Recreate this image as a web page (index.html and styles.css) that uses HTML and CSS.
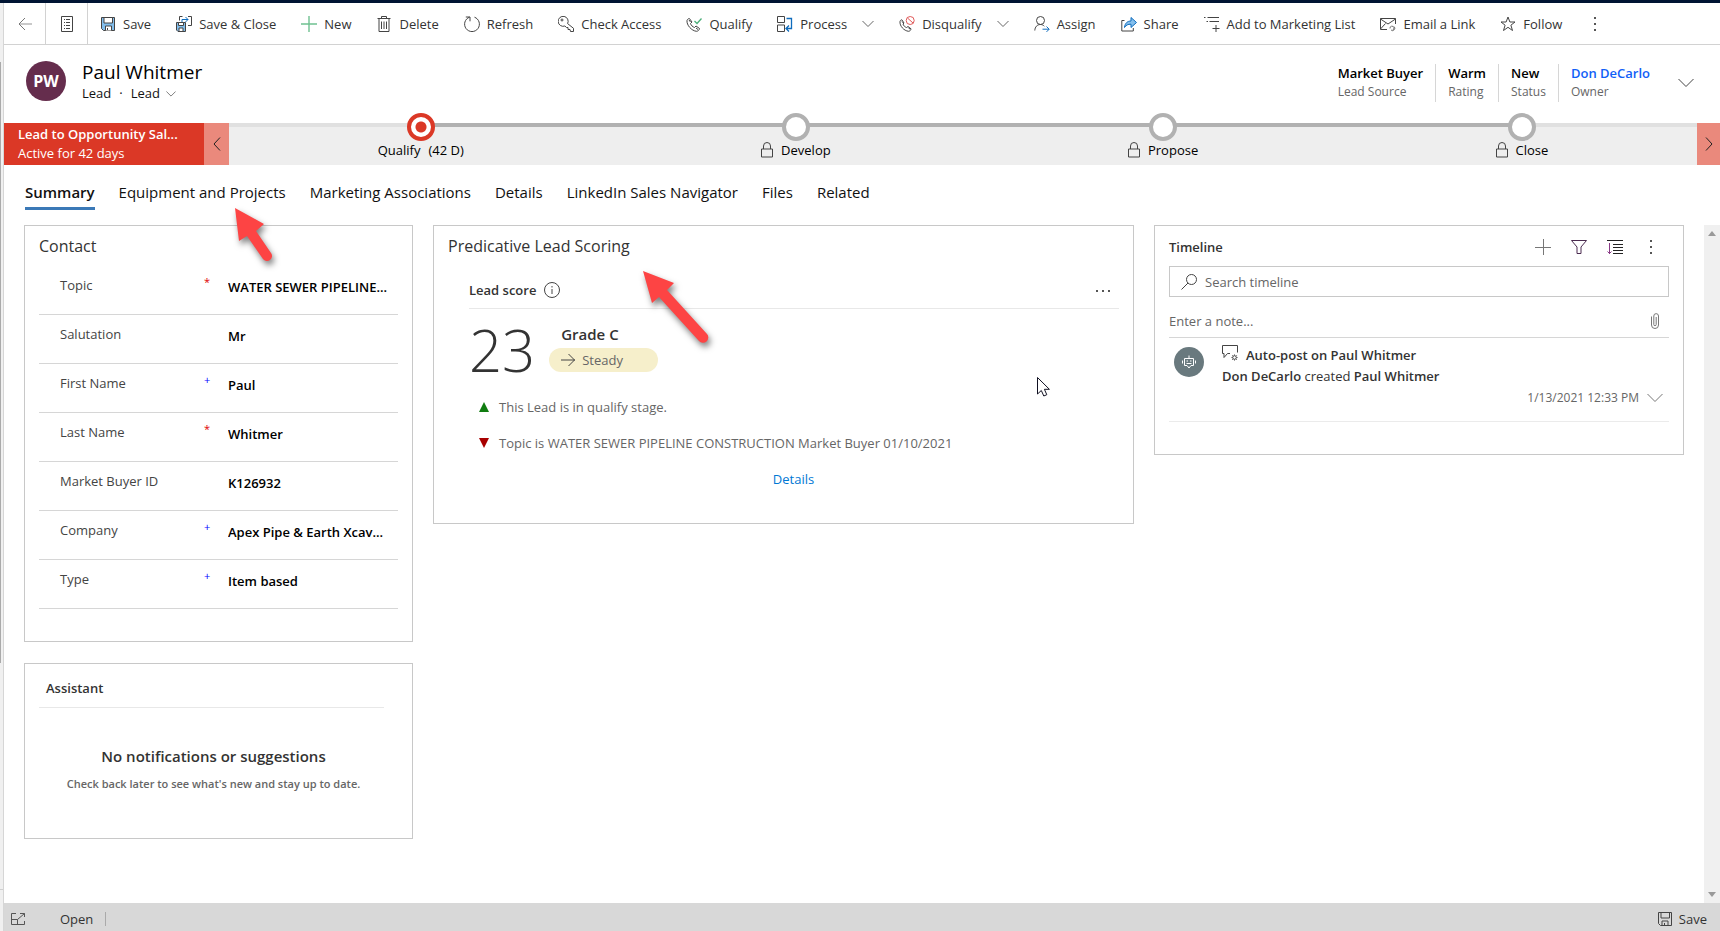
FILE: index.html
```html
<!DOCTYPE html>
<html lang="en">
<head>
<meta charset="utf-8">
<title>Lead: Paul Whitmer</title>
<link rel="stylesheet" href="styles.css">
</head>
<body>
<div class="top-strip"></div>
<div class="shell">
  <div class="nav-edge"><div class="nav-thumb"></div><div class="nav-rule"></div></div>
  <div class="app">
    <div class="commands" role="toolbar" aria-label="Commands">
      <button class="cmd-square" aria-label="Back"><svg class="icon" viewBox="0 0 16 16"><path d="M15 8H2" stroke="#bbb" stroke-width="1.6"/><path d="M8 2L2 8l6 6" stroke="#777"/></svg></button>
      <button class="cmd-square" aria-label="Form view"><svg class="icon" viewBox="0 0 16 16"><path d="M2.500.500h11v15h-11zM5 3.500h1M7 3.500h4M5 6.500h1M7 6.500h4M5 9.500h1M7 9.500h4M5 12.500h1M7 12.500h4"/></svg></button>
      <div class="cmd-list">
      <button class="cmd"><svg class="icon" viewBox="0 0 16 16"><path d="M1.500 1.500h13v13h-11l-2-2z" fill="#83beec"/><path d="M4 1.500h8.500V7H4z" fill="#fff"/><path d="M5.500 14.500V10h6v4.500M7.500 12v2" fill="#fff"/></svg>Save</button>
      <button class="cmd"><svg class="icon" viewBox="0 0 16 16"><path d="M.500 6.500h9v9h-7.500l-1.500-1.500z" fill="#83beec"/><path d="M2.500 6.500h5v3h-5z" fill="#fff"/><path d="M3 15v-3h4v3" fill="#fff"/><path d="M3.500 4.500v-4h3M12 .500h3.500v9H12"/><path d="M6 6V3.500h6M9.500 1L12 3.500 9.500 6" stroke="#0f6cbd"/></svg>Save &amp; Close</button>
      <button class="cmd"><svg class="icon" viewBox="0 0 16 16"><path d="M8 0v16M0 8h16" stroke="#6fc191" stroke-width="1.400"/></svg>New</button>
      <button class="cmd"><svg class="icon" viewBox="0 0 16 16"><path d="M1.500 2.500h13M5.500 2.500v-2h5v2M3 3v12.500h10V3M5.500 5.500v7.500M8 5.500v7.500M10.500 5.500v7.500"/></svg>Delete</button>
      <button class="cmd"><svg class="icon" viewBox="0 0 16 16"><path d="M5.500 1.200A7.400 7.400 0 1 0 10.500 1.200M1.800 1h4.200v4.300"/></svg>Refresh</button>
      <button class="cmd"><svg class="icon" viewBox="0 0 16 16"><path d="M9.600 7.600A5 5 0 1 0 6.900 10l1.600 1.500H10v2h2l.500 2h3v-3.200L9.600 7.600z"/><circle cx="4" cy="4" r="1"/></svg>Check Access</button>
      <button class="cmd"><svg class="icon" viewBox="0 0 16 16"><path d="M1 4.500c.3-1.200 1.500-2 2.400-2L6 6 4.500 7.500c.5 1.800 2.200 3.400 4 4L10 10l3.500 2.500c0 1.200-1.500 2.800-3 2.800C5.500 14.800.500 9 1 4.500z"/><path d="M3 4l1.500 2M10 12l2 1.500"/><path d="M8.500 5l2.500 2.500L15.500 2.500" stroke="#4caf7a" stroke-width="1.300"/></svg>Qualify</button>
      <button class="cmd"><svg class="icon" viewBox="0 0 16 16"><path d="M.500.500h7v6h-7zM.500 9h7v6.500h-7z"/><path d="M9.500 2.500h5v10h-5M12 9.500l-3 3 3 3" stroke="#0f6cbd" stroke-width="1.300"/></svg>Process<svg class="chev" viewBox="0 0 12 8"><path d="M.500 1L6 6.500 11.500 1"/></svg></button>
      <button class="cmd"><svg class="icon" viewBox="0 0 16 16"><path d="M1 5.500c.3-1.200 1-1.700 1.900-1.700L5 7 4 8c.5 1.800 2 3 3.500 3.500L9 10.500l3 2.300c0 1.200-1.200 2.500-2.500 2.500C5 14.800.500 10 1 5.500z"/><path d="M3 5.500l1 1.300M9.500 12l1.500 1"/><circle cx="11.200" cy="4.500" r="4" stroke="#e05a5a"/><path d="M8.500 2l5.500 5" stroke="#e05a5a"/></svg>Disqualify<svg class="chev" viewBox="0 0 12 8"><path d="M.500 1L6 6.500 11.500 1"/></svg></button>
      <button class="cmd"><svg class="icon" viewBox="0 0 16 16"><circle cx="6.500" cy="4.500" r="4"/><path d="M.800 14.500C1 11 3 8.500 6.500 8.500c1.700 0 3 .8 3.800 1.700"/><path d="M8.500 13.200h6.500M12.500 10.500l2.700 2.700-2.700 2.700" stroke="#0f6cbd"/></svg>Assign</button>
      <button class="cmd"><svg class="icon" viewBox="0 0 16 16"><path d="M3.500 4.500H.800v10.500h11.500v-3"/><path d="M3.500 11.500C4 7 6.500 5 10 5V1.500L15.500 6.500 10 11.500V8.200c-3 0-5 .8-6.500 3.300z" fill="#83beec" stroke="#0f6cbd"/></svg>Share</button>
      <button class="cmd"><svg class="icon" viewBox="0 0 16 16"><path d="M0 1.500h1.500M3.500 1.500H15M2.500 5.500H4M5.500 5.500H15M12 9v7M8.500 12.500h7"/></svg>Add to Marketing List</button>
      <button class="cmd"><svg class="icon" viewBox="0 0 16 16"><path d="M7 13.500H.500v-11h15V8M.500 3L8 8l7.500-5M.500 13l5-5.500"/><path d="M10 12.500a2 2 0 1 1 2.500 1.600M14 10.500a2.200 2.200 0 1 1-3 3.500" stroke="#777"/></svg>Email a Link</button>
      <button class="cmd"><svg class="icon" viewBox="0 0 16 16"><path d="M8 1l1.900 5H15l-4.100 3.200 1.600 5.300L8 11.300l-4.500 3.200 1.600-5.300L1 6h5.100z"/></svg>Follow</button>
      <button class="cmd" aria-label="More commands"><svg class="icon dots" viewBox="0 0 16 16"><path d="M7 1h2v2H7zM7 7h2v2H7zM7 13h2v2H7z"/></svg></button>
      </div>
    </div>

    <header class="record">
      <div class="avatar">PW</div>
      <div class="identity">
        <h1>Paul Whitmer</h1>
        <div class="kind"><span>Lead</span><span>·</span><button class="form-pick">Lead<svg class="chev small" viewBox="0 0 12 8"><path d="M.500 1L6 6.500 11.500 1"/></svg></button></div>
      </div>
      <dl class="facts">
        <div><dd>Market Buyer</dd><dt>Lead Source</dt></div>
        <div><dd>Warm</dd><dt>Rating</dt></div>
        <div><dd>New</dd><dt>Status</dt></div>
        <div><dd><a href="#">Don DeCarlo</a></dd><dt>Owner</dt></div>
      </dl>
      <button class="bare" aria-label="Expand header"><svg class="icon" viewBox="0 0 16 16"><path d="M.500 4L8 11.500 15.500 4"/></svg></button>
    </header>

    <section class="process" aria-label="Business process">
      <div class="process-name"><strong>Lead to Opportunity Sal...</strong><span>Active for 42 days</span></div>
      <button class="process-prev" aria-label="Previous stage"><svg class="angle" viewBox="0 0 8 14"><path d="M7 .500L1 7l6 6.500"/></svg></button>
      <div class="stages">
        <div class="rail"></div>
        <div class="stage"><span class="node active"></span><span class="stage-label"><span>Qualify</span><span>(42 D)</span></span></div>
        <div class="stage"><span class="node"></span><span class="stage-label"><svg class="lock" viewBox="0 0 12 16"><path d="M.500 7h11v8H.500zM2.500 7V4a3.500 3.500 0 0 1 7 0v3"/></svg>Develop</span></div>
        <div class="stage"><span class="node"></span><span class="stage-label"><svg class="lock" viewBox="0 0 12 16"><path d="M.500 7h11v8H.500zM2.500 7V4a3.500 3.500 0 0 1 7 0v3"/></svg>Propose</span></div>
        <div class="stage"><span class="node"></span><span class="stage-label"><svg class="lock" viewBox="0 0 12 16"><path d="M.500 7h11v8H.500zM2.500 7V4a3.500 3.500 0 0 1 7 0v3"/></svg>Close</span></div>
      </div>
      <button class="process-next" aria-label="Next stage"><svg class="angle" viewBox="0 0 8 14"><path d="M1 .500L7 7l-6 6.500"/></svg></button>
    </section>

    <nav class="tabs">
      <a class="current" href="#">Summary</a><a href="#">Equipment and Projects</a><a href="#">Marketing Associations</a><a href="#">Details</a><a href="#">LinkedIn Sales Navigator</a><a href="#">Files</a><a href="#">Related</a>
    </nav>

    <div class="scroll-area">
      <main class="columns">
        <div class="column">
          <section class="card contact">
            <h2>Contact</h2>
            <div class="field"><label for="topic">Topic</label><span class="mark req">*</span><input id="topic" value="WATER SEWER PIPELINE..."></div>
            <div class="field"><label for="salutation">Salutation</label><span class="mark"></span><input id="salutation" value="Mr"></div>
            <div class="field"><label for="first">First Name</label><span class="mark">+</span><input id="first" value="Paul"></div>
            <div class="field"><label for="last">Last Name</label><span class="mark req">*</span><input id="last" value="Whitmer"></div>
            <div class="field"><label for="buyer">Market Buyer ID</label><span class="mark"></span><input id="buyer" value="K126932"></div>
            <div class="field"><label for="company">Company</label><span class="mark">+</span><input id="company" value="Apex Pipe &amp; Earth Xcav..."></div>
            <div class="field"><label for="type">Type</label><span class="mark">+</span><input id="type" value="Item based"></div>
          </section>
          <section class="card assistant">
            <h3>Assistant</h3>
            <p class="empty-title">No notifications or suggestions</p>
            <p class="empty-text">Check back later to see what's new and stay up to date.</p>
          </section>
        </div>

        <section class="card scoring">
          <h2>Predicative Lead Scoring</h2>
          <div class="score-head"><h3>Lead score</h3><svg class="icon" viewBox="0 0 16 16"><circle cx="8" cy="8" r="7.500"/><path d="M8 7v5M8 4v1.500"/></svg><button class="bare more" aria-label="More options"><svg class="icon dots" viewBox="0 0 16 16"><path d="M1 7h2v2H1zM7 7h2v2H7zM13 7h2v2h-2z"/></svg></button></div>
          <div class="score">
            <div class="number">23</div>
            <div class="grade"><strong>Grade C</strong><span class="trend"><svg class="icon" viewBox="0 0 16 16"><path d="M1 8h14M8.500 2l6 6-6 6"/></svg>Steady</span></div>
          </div>
          <ul class="reasons">
            <li><svg class="tri" viewBox="0 0 10 10"><path d="M5 0l5 10H0z" fill="#107c10"/></svg>This Lead is in qualify stage.</li>
            <li><svg class="tri" viewBox="0 0 10 10"><path d="M0 0h10L5 10z" fill="#a80000"/></svg>Topic is WATER SEWER PIPELINE CONSTRUCTION Market Buyer 01/10/2021</li>
          </ul>
          <a class="details" href="#">Details</a>
        </section>

        <section class="card timeline">
          <div class="timeline-head">
            <h3>Timeline</h3>
            <button class="bare" aria-label="Add"><svg class="icon" viewBox="0 0 16 16"><path d="M8.500 0v16M0 8.500h16" stroke="#777"/></svg></button>
            <button class="bare" aria-label="Filter"><svg class="icon" viewBox="0 0 16 16"><path d="M.500 1.500h15L10 8v6.500H6V8z" stroke="#4b2b50"/></svg></button>
            <button class="bare" aria-label="Sort"><svg class="icon" viewBox="0 0 16 16"><path d="M0 1.500h16M6 5.500h10M6 8.500h10M6 11.500h10M6 14.500h10" stroke="#222"/><path d="M2.500 4v11M.500 12.500l2 2 2-2" stroke="#8a3a86"/></svg></button>
            <button class="bare" aria-label="More"><svg class="icon dots" viewBox="0 0 16 16"><path d="M7 1h2v2H7zM7 7h2v2H7zM7 13h2v2H7z"/></svg></button>
          </div>
          <div class="search"><svg class="icon" viewBox="0 0 16 16"><circle cx="10.500" cy="5.500" r="5"/><path d="M7 9L.500 15.500"/></svg><input type="text" aria-label="Search timeline" placeholder="Search timeline"></div>
          <div class="note"><input type="text" aria-label="Enter a note" placeholder="Enter a note..."><button class="bare" aria-label="Attach"><svg class="icon" viewBox="0 0 16 16"><path d="M4.500 3.500v8.500a3.500 3.500 0 0 0 7 0V3a2.300 2.300 0 0 0-4.700 0v8.500a1.200 1.200 0 0 0 2.400 0V4" stroke="#777"/></svg></button></div>
          <article class="post">
            <div class="bot"><svg class="icon" viewBox="0 0 16 16"><path d="M3.500 4.500h9v7h-2.500L8 14l-2-2.500H3.500zM8 4.500V1.500M1.500 6.500v3M14.500 6.500v3"/><path d="M5.500 7h1.500M9 7h1.500M5.500 9.500h5"/></svg></div>
            <div class="post-body">
              <div class="post-title"><svg class="icon" viewBox="0 0 16 16"><path d="M8 8.500H5.500L2 12.500V8.500H.500v-8h15v7"/><circle cx="12.500" cy="12.500" r="1.800"/><path d="M12.500 9.500v1M12.500 14.500v1M9.500 12.500h1M14.500 12.500h1M10.400 10.400l.7.700M14 14l.7.700M14.700 10.400l-.7.700M11 14l-.7.700"/></svg><strong>Auto-post on Paul Whitmer</strong></div>
              <div class="post-text"><strong>Don DeCarlo</strong> created <strong>Paul Whitmer</strong></div>
              <div class="post-foot"><time>1/13/2021 12:33 PM</time><button class="bare" aria-label="Expand post"><svg class="icon" viewBox="0 0 16 16"><path d="M.500 4L8 11.500 15.500 4" stroke="#777"/></svg></button></div>
            </div>
          </article>
        </section>
      </main>
      <div class="scrollbar" aria-hidden="true"><svg viewBox="0 0 8 5"><path d="M0 5l4-5 4 5z"/></svg><svg viewBox="0 0 8 5"><path d="M0 0h8L4 5z"/></svg></div>
    </div>

    <footer class="status">
      <button class="bare" aria-label="Pop out"><svg class="icon" viewBox="0 0 16 16"><path d="M6 2.500H1.500v11h13V10M1.500 8.500h6v5M7.500 8.500l7-6M10 2.500h4.500V6" stroke="#555"/></svg></button>
      <span class="state">Open</span>
      <button class="save"><svg class="icon" viewBox="0 0 16 16"><path d="M1.500 1.500h13v13h-11l-2-2zM4 1.500h8.500V7H4zM5 14.500V10h6v4.500M7.500 12v2"/></svg>Save</button>
    </footer>
  </div>
</div>

<svg class="pointer pointer-tab" viewBox="0 0 70 80"><path d="M5 5l29 16-8 7 15 22a5 5 0 0 1-8 6L17 33l-8 5z"/></svg>
<svg class="pointer pointer-score" viewBox="0 0 70 80"><path d="M5 5l31 12-7 7 40 44a5 5 0 0 1-8 7L21 31l-7 6z"/></svg>
<svg class="cursor" viewBox="0 0 14 20"><path d="M.500.500v16.500l3.800-3.500 2.500 5.500 3-1.300-2.400-5.400h5z"/></svg>
</body>
</html>
```

FILE: styles.css
```css
* { box-sizing: border-box; }
body {
  margin: 0;
  min-height: 100vh;
  display: flex;
  flex-direction: column;
  background: #fff;
  color: #333;
  font: 13px/20px "Open Sans", "Noto Sans", sans-serif;
}
h1, h2, h3, p, ul, dl, dd { margin: 0; padding: 0; }
ul { list-style: none; }
strong, h3 { font-weight: 600; }
a { color: inherit; text-decoration: none; }
button, input { font: inherit; color: inherit; border: 0; background: none; padding: 0; margin: 0; }
input { min-width: 0; outline: 0; }
.icon { width: 16px; height: 16px; flex: none; fill: none; stroke: #444; display: block; }
.icon.dots { fill: #555; stroke: none; }
.chev { width: 12px; height: 8px; fill: none; stroke: #666; margin-left: 8px; }
.chev.small { width: 10px; margin-left: 6px; }
.bare { display: flex; align-items: center; }

.top-strip { height: 3px; background: #001433; }
.shell { flex: 1; display: flex; }
.nav-edge { width: 4px; background: #f0f0f0; border-right: 1px solid #d6d6d6; display: flex; flex-direction: column; padding: 59px 0 41px; justify-content: space-between; }
.nav-thumb { width: 1px; height: 601px; background: #aaa; }
.nav-rule { height: 1px; background: #d0d0d0; }
.app { flex: 1; min-width: 0; display: flex; flex-direction: column; }

.commands { display: flex; height: 42px; border-bottom: 1px solid #d2d2d2; }
.cmd-square { width: 42px; display: flex; align-items: center; justify-content: center; border-right: 1px solid #d2d2d2; }
.cmd-list { display: flex; padding-left: 12px; gap: 25px; }
.cmd { display: flex; align-items: center; gap: 7px; white-space: nowrap; }

.record { display: flex; align-items: center; height: 78px; padding: 0 26px 6px 22px; }
.avatar { width: 40px; height: 40px; border-radius: 50%; background: #652d4d; color: #fff; font-size: 16px; font-weight: 700; line-height: 40px; text-align: center; }
.identity { margin-left: 16px; color: #111; }
h1 { font-size: 19px; font-weight: 500; line-height: 24px; color: #000; }
.kind { display: flex; gap: 8px; line-height: 18px; }
.facts { margin-left: auto; display: flex; padding-top: 4px; }
.facts > div { padding: 0 12px; height: 38px; display: flex; flex-direction: column; border-left: 1px solid #d6d6d6; }
.facts > div:first-child { border: 0; }
dd { font-weight: 600; line-height: 18px; color: #000; }
dd a { color: #1160f7; }
dt { font-size: 12px; line-height: 20px; color: #666; }
.facts + .bare { margin-left: 16px; padding-top: 4px; }

.process { display: flex; height: 42px; }
.process-name { width: 200px; padding: 2px 14px; background: #db3826; color: #fff; display: flex; flex-direction: column; white-space: nowrap; line-height: 19px; }
.process-prev, .process-next { width: 25px; background: #ea897c; display: flex; align-items: center; justify-content: center; }
.process-next { width: 23px; }
.angle { width: 8px; height: 14px; fill: none; stroke: #222; }
.stages { flex: 1; position: relative; display: flex; justify-content: space-around; background: #eee; border-top: 4px solid #e0e0e0; color: #000; }
.rail { position: absolute; top: -4px; left: 13%; right: 12%; height: 4px; background: #b1b1b1; }
.stage { display: flex; flex-direction: column; align-items: center; position: relative; margin-top: -14px; }
.node { width: 28px; height: 28px; border-radius: 50%; border: 4px solid #b1b1b1; background: #fff; }
.node.active { border-color: #db3826; background: radial-gradient(circle, #db3826 0 5px, #fff 6px); }
.stage-label { display: flex; align-items: center; gap: 8px; line-height: 18px; }
.lock { width: 12px; height: 16px; fill: none; stroke: #444; }

.tabs { display: flex; gap: 24px; padding: 17px 21px 15px; font-size: 15px; line-height: 20px; color: #111; }
.tabs a { padding-bottom: 5px; border-bottom: 3px solid transparent; }
.tabs .current { font-weight: 600; border-color: #3b79b7; }

.scroll-area { flex: 1; display: flex; }
.columns { flex: 1; display: grid; grid-template-columns: 389fr 701fr 530fr; gap: 20px; align-items: start; padding: 0 20px; }
.column { display: flex; flex-direction: column; gap: 21px; min-width: 0; }
.card { border: 1px solid #c8c8c8; padding: 9px 14px 0; min-width: 0; }
h2 { font-size: 16px; font-weight: 400; line-height: 22px; }
h3 { font-size: 13px; }
.contact { padding-bottom: 32px; }
.contact h2 { margin-bottom: 9px; }
.field { display: flex; height: 49px; padding: 8px 0 0 21px; border-bottom: 1px solid #d6d6d6; color: #444; }
.field label { width: 140px; margin-top: 1px; line-height: 20px; }
.mark { width: 28px; padding-left: 4px; font-size: 11px; line-height: 16px; color: #00f; }
.req { color: #e00000; }
.field input { flex: 1; height: 26px; font-weight: 600; color: #000; }

.assistant { height: 176px; text-align: center; }
.assistant h3 { text-align: left; padding: 5px 7px 9px; margin-right: 14px; border-bottom: 1px solid #e8e8e8; }
.empty-title { margin: 38px 10px 0 0; font-size: 15px; font-weight: 600; line-height: 20px; }
.empty-text { margin: 8px 10px 0 0; font-size: 11px; font-weight: 600; line-height: 20px; color: #666; }

.scoring { height: 299px; }
.score-head { display: flex; align-items: center; gap: 8px; margin: 22px 0 0 21px; height: 30px; padding-bottom: 8px; border-bottom: 1px solid #e8e8e8; }
.more { margin: 0 8px 0 auto; padding-top: 2px; }
.score { display: flex; gap: 14px; padding-left: 21px; margin-top: 9px; }
.number { font-size: 58px; font-weight: 300; line-height: 64px; }
.grade { display: flex; flex-direction: column; padding-top: 6px; gap: 4px; }
.grade strong { padding-left: 12px; font-size: 15px; line-height: 20px; }
.trend { width: 109px; height: 24px; border-radius: 12px; background: #f6efcb; display: flex; align-items: center; gap: 6px; padding-left: 11px; color: #666; }
.reasons { margin: 15px 0 0 31px; color: #666; display: flex; flex-direction: column; gap: 16px; }
.reasons li { display: flex; align-items: center; gap: 10px; }
.tri { width: 10px; height: 10px; }
.details { display: block; margin-top: 16px; padding-left: 20px; text-align: center; color: #0078d4; }

.timeline { height: 230px; padding-top: 11px; }
.timeline-head { display: flex; align-items: center; gap: 20px; padding-right: 10px; }
.timeline-head h3 { margin-right: auto; }
.search { display: flex; align-items: center; gap: 8px; height: 31px; margin-top: 9px; padding: 0 11px; border: 1px solid #c8c8c8; }
.search input, .note input { flex: 1; }
input::placeholder { color: #666; opacity: 1; }
.note { display: flex; align-items: center; height: 41px; padding: 8px 6px 0 0; border-bottom: 1px solid #d6d6d6; }
.post { display: flex; gap: 18px; height: 84px; padding: 7px 6px 0 5px; border-bottom: 1px solid #ebebeb; }
.bot { width: 30px; height: 30px; margin-top: 2px; border-radius: 50%; background: #69797e; display: flex; align-items: center; justify-content: center; }
.bot .icon { stroke: #fff; }
.post-body { flex: 1; }
.post-title { display: flex; gap: 8px; }
.post-text { padding-top: 1px; }
.post-foot { display: flex; justify-content: flex-end; gap: 8px; padding-top: 2px; font-size: 12px; color: #666; }

.scrollbar { width: 16px; background: #f0f0f0; display: flex; flex-direction: column; justify-content: space-between; align-items: center; padding: 6px 0; }
.scrollbar svg { width: 8px; height: 5px; fill: #999; }
.status { height: 28px; background: #d8d8d8; display: flex; align-items: center; padding: 3px 13px 0 6px; }
.state { margin-left: 34px; padding-right: 12px; line-height: 14px; border-right: 1px solid #aaa; }
.save { margin-left: auto; display: flex; align-items: center; gap: 6px; }

.pointer { position: absolute; width: 70px; height: 80px; fill: #fd4444; overflow: visible; filter: drop-shadow(2px 4px 3px rgba(0, 0, 0, .5)); pointer-events: none; }
.pointer-tab { left: 230px; top: 203px; }
.pointer-score { left: 638px; top: 266px; }
.cursor { position: absolute; left: 1037px; top: 377px; width: 14px; height: 20px; fill: #fff; stroke: #112; }
```
